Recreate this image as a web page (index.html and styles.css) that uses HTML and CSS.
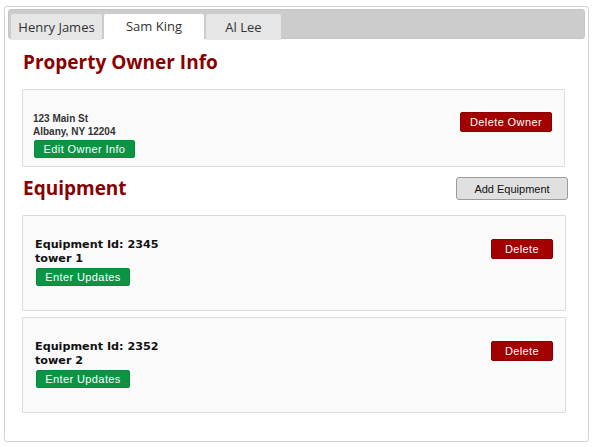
FILE: index.html
```html
<!DOCTYPE html>
<html>
<head>
<meta charset="utf-8">
<link rel="stylesheet" href="styles.css">
</head>
<body>
<div class="frame">
  <div class="tabbar">
    <div class="tab tab-henry">Henry James</div>
    <div class="tab tab-sam active">Sam King</div>
    <div class="tab tab-al">Al Lee</div>
  </div>
  <div class="content">
    <h2 class="section-title title-owner">Property Owner Info</h2>
    <div class="card owner-card">
      <div class="card-main">
        <div class="address">123 Main St<br>Albany, NY 12204</div>
        <button class="btn btn-green btn-edit">Edit Owner Info</button>
      </div>
      <button class="btn btn-red btn-delete-owner">Delete Owner</button>
    </div>
    <div class="section-row">
      <h2 class="section-title">Equipment</h2>
      <button class="btn btn-gray">Add Equipment</button>
    </div>
    <div class="card equip-card">
      <div class="card-main">
        <div class="equip-text">Equipment Id: 2345<br>tower 1</div>
        <button class="btn btn-green btn-update">Enter Updates</button>
      </div>
      <button class="btn btn-red btn-delete">Delete</button>
    </div>
    <div class="card equip-card">
      <div class="card-main">
        <div class="equip-text">Equipment Id: 2352<br>tower 2</div>
        <button class="btn btn-green btn-update">Enter Updates</button>
      </div>
      <button class="btn btn-red btn-delete">Delete</button>
    </div>
  </div>
</div>
</body>
</html>
```

FILE: styles.css
```css
html, body {
  margin: 0;
  padding: 0;
  background: #ffffff;
}

.frame {
  margin: 6px 4px 0 4px;
  width: 585px;
  height: 436px;
  box-sizing: border-box;
  border: 1px solid #d4d4d4;
  border-radius: 3px;
  padding: 2px 3px 0 3px;
  box-shadow: 0 0 1px rgba(0,0,0,0.05);
}

.tabbar {
  display: flex;
  gap: 2px;
  height: 30px;
  box-sizing: border-box;
  padding: 4px 2px 0 2px;
  background: #cccccc;
  border: 1px solid #c4c4c4;
  border-radius: 3px;
}

.tab {
  box-sizing: border-box;
  height: 26px;
  display: flex;
  align-items: center;
  justify-content: center;
  background: #e6e6e6;
  border-radius: 2px 2px 0 0;
  font-family: "Open Sans", "Liberation Sans", sans-serif;
  font-size: 13px;
  color: #333333;
  padding-top: 0;
}

.tab-henry { width: 91px; }
.tab-sam { width: 100px; }
.tab-al { width: 75px; }

.tab.active {
  background: #ffffff;
  height: 27px;
  margin-bottom: -1px;
  padding-bottom: 4px;
}

.content {
  padding: 0 18px 0 14px;
}

.section-title {
  margin: 0;
  padding-left: 1px;
  font-family: "Open Sans", "Liberation Sans", sans-serif;
  font-weight: 700;
  font-size: 19px;
  line-height: 24px;
  color: #880000;
}

.title-owner {
  margin-top: 11px;
}

.card {
  display: flex;
  justify-content: space-between;
  align-items: flex-start;
  box-sizing: border-box;
  background: #fafafa;
  border: 1px solid #dcdcdc;
  border-radius: 1px;
}

.owner-card {
  margin-top: 15px;
  width: 543px;
  height: 78px;
  padding: 22px 12px 0 10px;
}

.address {
  font-family: "Liberation Sans", Arial, sans-serif;
  font-weight: 700;
  font-size: 10px;
  line-height: 13px;
  color: #333333;
}

.btn {
  box-sizing: border-box;
  border-radius: 2px;
  font-family: "Liberation Sans", Arial, sans-serif;
  font-size: 11px;
  letter-spacing: 0.4px;
  padding: 0;
  cursor: pointer;
}

.btn-green {
  background: #0b9444;
  border: 1px solid #0a8a3f;
  color: #ffffff;
  height: 18px;
  line-height: 16px;
}

.btn-edit {
  display: block;
  margin-top: 2px;
  margin-left: 1px;
  width: 101px;
}

.btn-red {
  background: #a30000;
  border: 1px solid #8a0000;
  color: #ffffff;
  height: 20px;
  line-height: 18px;
}

.btn-delete-owner {
  width: 92px;
  margin-top: 0;
}

.section-row {
  display: flex;
  justify-content: space-between;
  align-items: center;
  margin-top: 9px;
  width: 546px;
}

.btn-gray {
  width: 112px;
  height: 23px;
  margin-top: 1px;
  background: #e0e0e0;
  border: 1px solid #9c9c9c;
  border-radius: 3px;
  color: #111111;
  letter-spacing: 0;
  font-size: 11px;
}

.equip-card {
  width: 544px;
  height: 96px;
  margin-top: 15px;
  padding: 22px 12px 0 12px;
}

.equip-card + .equip-card {
  margin-top: 6px;
}

.equip-text {
  font-family: "DejaVu Sans", Verdana, sans-serif;
  font-weight: 700;
  font-size: 11.2px;
  line-height: 14px;
  color: #111111;
}

.btn-update {
  display: block;
  margin-top: 2px;
  margin-left: 1px;
  width: 94px;
}

.btn-delete {
  width: 62px;
  height: 20px;
  margin-top: 1px;
}
```
